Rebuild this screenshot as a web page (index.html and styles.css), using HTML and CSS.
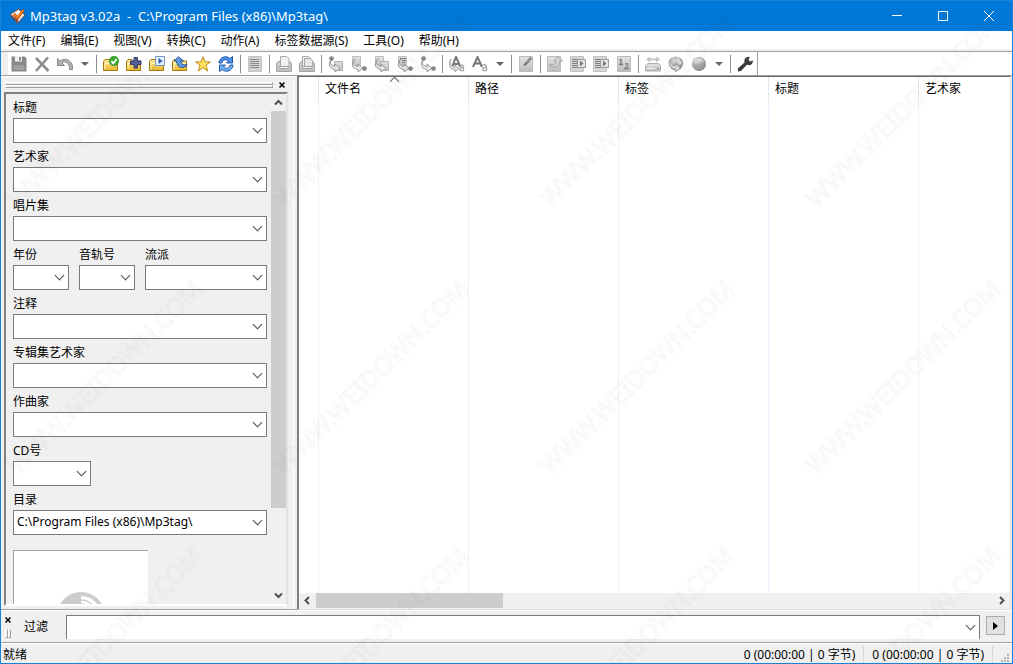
FILE: index.html
```html
<!DOCTYPE html>
<html lang="zh-CN">
<head>
<meta charset="utf-8">
<title>Mp3tag v3.02a</title>
<link rel="stylesheet" href="styles.css">
</head>
<body>
<svg class="defs" aria-hidden="true">
  <defs>
    <linearGradient id="gold" x1="0" y1="0" x2="0" y2="1"><stop offset="0" stop-color="#fff0a0"/><stop offset="1" stop-color="#e8b52c"/></linearGradient>
    <linearGradient id="grey" x1="0" y1="0" x2="0" y2="1"><stop offset="0" stop-color="#e4e4e4"/><stop offset="1" stop-color="#bdbdbd"/></linearGradient>
    <radialGradient id="ball" cx=".35" cy=".3" r=".8"><stop offset="0" stop-color="#d8d8d8"/><stop offset="1" stop-color="#808080"/></radialGradient>
    <symbol id="folder" viewBox="0 0 16 16"><path d="M.5 14.5V5.500L2 3.500h4l1.500 1.500h7v9.500z" fill="url(#gold)" stroke="#a87a0c"/><path d="M2 13.500V7.500h11.500" fill="none" stroke="#fff6c8"/></symbol>
    <symbol id="page" viewBox="0 0 16 16"><path d="M6.500 5.500h8v9h-8z" fill="url(#grey)" stroke="#b0b0b0"/></symbol>
    <symbol id="leaf" viewBox="0 0 16 16"><path d="M1.500.500h8v10h-8z" fill="url(#grey)" stroke="#bdbdbd"/></symbol>
    <symbol id="arrow" viewBox="0 0 16 16"><path d="M4.500 2.500C1.500 5 1.500 9.500 7 10.500V8l5 4.300L7 16v-2.500C0 13 0 5.500 4.500 2.500z" fill="#e6e6e6" stroke="#949494" stroke-width=".9"/></symbol>
    <symbol id="dot" viewBox="0 0 4 4"><circle cx="2" cy="2" r="1.900" fill="#858585"/></symbol>
    <symbol id="tray" viewBox="0 0 16 16"><path d="M.500 7.500 2 5.500h12l1.500 2v8H.500z" fill="#cdcdcd" stroke="#a3a3a3"/><path d="M1.500 14h13" stroke="#b4b4b4"/></symbol>
  </defs>
</svg>

<div class="window">
  <header class="titlebar">
    <svg class="app-icon" viewBox="0 0 16 16" aria-hidden="true"><path d="M.5 6.500 9 1l6.500 6L8 15.500z" fill="#e9dcd5" stroke="#5a3a30" stroke-width=".8"/><path d="M3 6.500 9 2.500l4.500 4.500-5 5z" fill="#fff"/><path d="M1 7.500 8 15l1-2-7-6z" fill="#7c4030"/><path d="M4.500 6 8 10 14 2" fill="none" stroke="#b63a00" stroke-width="2.800"/><path d="M4.800 6 8 9.500 13.800 2.200" fill="none" stroke="#ff8a1c" stroke-width="1.500"/></svg>
    <h1 class="title">Mp3tag v3.02a&nbsp; -&nbsp; C:\Program Files (x86)\Mp3tag\</h1>
    <button class="caption" aria-label="最小化"><svg viewBox="0 0 10 10"><path d="M0 4.500h10"/></svg></button>
    <button class="caption" aria-label="最大化"><svg viewBox="0 0 10 10"><path d="M.5.500h9v9h-9z"/></svg></button>
    <button class="caption" aria-label="关闭"><svg viewBox="0 0 10 10"><path d="m0 0 10 10M10 0 0 10"/></svg></button>
  </header>

  <nav class="menu">
    <button>文件(F)</button><button>编辑(E)</button><button>视图(V)</button><button>转换(C)</button><button>动作(A)</button><button>标签数据源(S)</button><button>工具(O)</button><button>帮助(H)</button>
  </nav>

  <div class="toolbar" role="toolbar">
    <button class="tool" aria-label="保存"><svg viewBox="0 0 16 16"><path d="M.5.500h13l2 2v13H.5z" fill="#888"/><path d="M4 0h7v5.500H4z" fill="#f2f2f2"/><path d="M8 1h2v3.500H8z" fill="#888"/><path d="M2.500 9h11v5h-11z" fill="#a0a0a0"/></svg></button>
    <button class="tool" aria-label="删除"><svg viewBox="0 0 16 16"><path d="M2 2 14.500 15M14 1.500 2 15" fill="none" stroke="#8c8c8c" stroke-width="2.600"/></svg></button>
    <button class="tool" aria-label="撤消"><svg viewBox="0 0 16 16"><path d="M.5 2.500V9.500h7L5 7C8 4.500 13 7 12.500 13.500H15.500C17 5.500 8.500.500 2.800 5z" fill="#b2b2b2" stroke="#808080" stroke-width=".9"/></svg></button>
    <button class="drop" aria-label="撤消列表"></button><span class="sep"></span>
    <button class="tool" aria-label="更改目录"><svg viewBox="0 0 16 16"><use href="#folder"/><circle cx="11" cy="5" r="4.700" fill="#38aa2d" stroke="#1e7d1b" stroke-width=".6"/><path d="m8.300 5 2 2.300L13.700 3" fill="none" stroke="#fff" stroke-width="1.800"/></svg></button>
    <button class="tool" aria-label="添加目录"><svg viewBox="0 0 16 16"><use href="#folder"/><path d="M8 1.500h3.500V5H15v3.500h-3.500V12H8V8.500H4.500V5H8z" fill="#55609a" stroke="#273166" stroke-width=".9"/></svg></button>
    <button class="tool" aria-label="播放列表"><svg viewBox="0 0 16 16"><use href="#folder"/><path d="M6.500.500h9v9h-9z" fill="#e7f1ff" stroke="#7899c8"/><path d="m9.500 2 4 3-4 3z" fill="#225cae"/></svg></button>
    <button class="tool" aria-label="上级目录"><svg viewBox="0 0 16 16"><use href="#folder"/><path d="m6.500.800 5 4.200H9c0 3 2 4.500 6 3.500-2 4.500-10 4.500-10.500-3.500H2z" fill="#619be0" stroke="#174f9d" stroke-width=".9"/></svg></button>
    <button class="tool" aria-label="收藏目录"><svg viewBox="0 0 16 16"><path d="m8 .800 2 5.100h5.400L11 9.200l1.800 5.900L8 11.700l-4.800 3.400L5 9.200.6 5.900H6z" fill="#ffe15e" stroke="#c18a16"/></svg></button>
    <button class="tool" aria-label="刷新"><svg viewBox="0 0 16 16"><path d="M1 7C1.500 1 8-1 12 2.500L14.500.500V7H8.500L10.500 5C7.500 2.500 4.500 4 4 7z" fill="#4d93ea" stroke="#16469c" stroke-width=".9"/><path d="M15 9c-.5 6-7 8-11 4.500L1.500 15.500V9h6L5.500 11C8.500 13.500 11.500 12 12 9z" fill="#6cb4f5" stroke="#16469c" stroke-width=".9"/></svg></button>
    <span class="sep"></span>
    <button class="tool" aria-label="全选"><svg viewBox="0 0 16 16"><path d="M1.500.500h13v15h-13z" fill="#d2d2d2" stroke="#c2c2c2"/><path d="M3 3.500h9M3 5.500h9M3 7.500h9M3 9.500h9M3 11.500h9" stroke="#8c8c8c"/></svg></button>
    <span class="sep"></span>
    <button class="tool" aria-label="复制标签"><svg viewBox="0 0 16 16"><use href="#tray"/><path d="M4.500 10.500V.500h6l2.500 2v8z" fill="#f0f0f0" stroke="#aaa"/><path d="M3 10.500h10v2H3z" fill="#f0f0f0" stroke="#a3a3a3"/></svg></button>
    <button class="tool" aria-label="粘贴标签"><svg viewBox="0 0 16 16"><use href="#tray"/><path d="M3.500 10.500V.500h6l2 2v8z" fill="#eee" stroke="#aaa"/><path d="M5.500 10.500v-8h6l2 2v6z" fill="#e8e8e8" stroke="#a3a3a3"/><path d="M3 10.500h10v2H3z" fill="#f0f0f0" stroke="#a3a3a3"/></svg></button>
    <span class="sep"></span>
    <button class="tool" aria-label="标签到文件名"><svg viewBox="0 0 16 16"><use href="#page"/><use href="#arrow"/><use href="#dot" x="1" width="5" height="5"/></svg></button>
    <button class="tool" aria-label="文件名到标签"><svg viewBox="0 0 16 16"><use href="#leaf"/><use href="#arrow"/><use href="#dot" x="11" y="10" width="5" height="5"/></svg></button>
    <button class="tool" aria-label="文件名到文件名"><svg viewBox="0 0 16 16"><use href="#leaf"/><use href="#page"/><use href="#arrow"/></svg></button>
    <button class="tool" aria-label="文本文件到标签"><svg viewBox="0 0 16 16"><use href="#leaf"/><use href="#arrow"/><path d="M3 2.500h6M5 4.500h4M5 6.500h3" stroke="#777"/><use href="#dot" x="11" y="10" width="5" height="5"/></svg></button>
    <button class="tool" aria-label="标签到标签"><svg viewBox="0 0 16 16"><use href="#arrow"/><use href="#dot" x="1" width="5" height="5"/><use href="#dot" x="11" y="10" width="5" height="5"/></svg></button>
    <span class="sep"></span>
    <button class="tool" aria-label="动作"><svg viewBox="0 0 16 16"><path d="m3 11 4-10 4.500 10M4.500 8h5" fill="none" stroke="#777" stroke-width="2"/><path d="M2.500 3C0 6 1 10 6 11V9l4 3.500L6 16v-2C-1 13-1 6 2.500 3z" fill="#ddd" stroke="#999" stroke-width=".8"/><path d="M11 9.500c4-1 3.500 1 3.500 5-5 1-5-3 0-3" fill="none" stroke="#aaa" stroke-width="1.300"/></svg></button>
    <button class="tool" aria-label="快速动作"><svg viewBox="0 0 16 16"><path d="M1 11 5.500 1 10 11M3 7.500h5.500" fill="none" stroke="#777" stroke-width="2"/><path d="M10.500 9c4.500-1 4 1 4 5.500-5.500 1-5-3.500 0-3" fill="none" stroke="#aaa" stroke-width="1.400"/></svg></button>
    <button class="drop" aria-label="动作列表"></button><span class="sep"></span>
    <button class="tool" aria-label="扩展标签"><svg viewBox="0 0 16 16"><path d="M1.500.500h13v15h-13z" fill="url(#grey)" stroke="#bbb"/><path d="m6 8 6-7 2 1.500-6 7-2.500.5z" fill="#777"/><path d="m8 7 4-4" stroke="#aaa"/></svg></button>
    <span class="sep"></span>
    <button class="tool" aria-label="导出"><svg viewBox="0 0 16 16"><path d="M.500.500h13v15H.500z" fill="url(#grey)" stroke="#bbb"/><path d="M2 9c5 0 7-1 7-4H6.500L11 .500 15.500 5H13c0 6-6 8-11 4z" fill="#d2d2d2" stroke="#999" stroke-width=".8"/></svg></button>
    <button class="tool" aria-label="播放列表全部"><svg viewBox="0 0 16 16"><path d="M.500.500h13v15H.500z" fill="#d6d6d6" stroke="#c2c2c2"/><path d="M2 3.500h8M2 5.500h5M2 7.500h5M2 9.500h5M2 11.500h8" stroke="#808080"/><path d="M7.500 3.500h8v8h-8z" fill="#e5e5e5" stroke="#999"/><path d="m10 4.500 3.500 3L10 10.500z" fill="#777"/></svg></button>
    <button class="tool" aria-label="播放列表所选"><svg viewBox="0 0 16 16"><path d="M.500.500h13v15H.500z" fill="#d6d6d6" stroke="#c2c2c2"/><path d="M2 3.500h8M2 5.500h5M2 7.500h5M2 9.500h5M2 11.500h8" stroke="#808080"/><path d="M7.500 3.500h8v8h-8z" fill="#e5e5e5" stroke="#999"/><path d="m10 4.500 3.500 3L10 10.500z" fill="#777"/></svg></button>
    <button class="tool" aria-label="自动编号"><svg viewBox="0 0 16 16"><path d="M1.500.500h13v15h-13z" fill="url(#grey)" stroke="#bbb"/><path d="M3.500 4.500 5 3.500V8M3 8.500h4M9 8c3.500-1.500 4 1 0 4.500h4" fill="none" stroke="#777" stroke-width="1.300"/></svg></button>
    <span class="sep"></span>
    <button class="tool" aria-label="数据源"><svg viewBox="0 0 16 16"><path d="m1 3.500 4-3v2h6v-2l4 3-4 3v-2H5v2z" fill="#c4c4c4"/><path d="M.500 9.500 3 7.500h10.500l2 2v5.500H.500z" fill="url(#grey)" stroke="#b0b0b0"/><path d="M2 12.500h8" stroke="#f6f6f6"/><path d="M12 12.500h2" stroke="#777"/></svg></button>
    <button class="tool" aria-label="网络数据源"><svg viewBox="0 0 16 16"><circle cx="8" cy="7.500" r="7" fill="url(#ball)"/><path d="M8 1l3 1 3 5-2 2-3-3z" fill="#ddd"/><path d="M3 2.500c-2 4 0 6.500 4.500 7.500V7.500l5 4.300L7.500 16v-2.500C1 12-1 6 3 2.500z" fill="#d8d8d8" stroke="#8c8c8c" stroke-width=".7"/></svg></button>
    <button class="tool" aria-label="标签数据源"><svg viewBox="0 0 16 16"><circle cx="8" cy="8" r="7" fill="url(#ball)"/><path d="m3 4 4-2 4 1 2 3-3-1-2 1-3-1-2 1z" fill="#ddd"/><path d="M3 8h10l-2 4-3 1-3-2z" fill="#999" opacity=".5"/></svg></button>
    <button class="drop" aria-label="数据源列表"></button><span class="sep"></span>
    <button class="tool" aria-label="选项"><svg viewBox="0 0 16 16"><path d="M10 1 13 .800 11.500 3.500l1.500 2 3-1c0 4-3 5.500-6 4.300L4 15l-3 .500L.800 12.500 7.500 6.500C7 4 7.500 2 10 1z" fill="#3b3d40"/></svg></button>
    <span class="toolbar-end"></span>
  </div>

  <main class="work">
    <aside class="dock">
      <div class="grip-row"><div class="grip"><i></i><i></i></div><button class="mini-close" aria-label="关闭面板"><svg viewBox="0 0 6 6"><path d="m.5.500 5 5m0-5-5 5"/></svg></button></div>
      <div class="panel">
        <form class="fields">
          <div class="field"><label for="f-title">标题</label><div class="combo"><select id="f-title"><option></option></select></div></div>
          <div class="field"><label for="f-artist">艺术家</label><div class="combo"><select id="f-artist"><option></option></select></div></div>
          <div class="field"><label for="f-album">唱片集</label><div class="combo"><select id="f-album"><option></option></select></div></div>
          <div class="trio">
            <div class="field small"><label for="f-year">年份</label><div class="combo"><select id="f-year"><option></option></select></div></div>
            <div class="field small"><label for="f-track">音轨号</label><div class="combo"><select id="f-track"><option></option></select></div></div>
            <div class="field"><label for="f-genre">流派</label><div class="combo"><select id="f-genre"><option></option></select></div></div>
          </div>
          <div class="field"><label for="f-comment">注释</label><div class="combo"><select id="f-comment"><option></option></select></div></div>
          <div class="field"><label for="f-aa">专辑集艺术家</label><div class="combo"><select id="f-aa"><option></option></select></div></div>
          <div class="field"><label for="f-comp">作曲家</label><div class="combo"><select id="f-comp"><option></option></select></div></div>
          <div class="field disc"><label for="f-disc">CD号</label><div class="combo"><select id="f-disc"><option></option></select></div></div>
          <div class="field"><label for="f-dir">目录</label><div class="combo"><select id="f-dir"><option>C:\Program Files (x86)\Mp3tag\</option></select></div></div>
          <div class="cover"><svg viewBox="0 0 48 48" aria-hidden="true"><circle cx="24" cy="24" r="24" fill="#cdcdcd"/><path d="M24 4a20 20 0 0 1 20 20H24z" fill="#fff"/><path d="M24 8a16 16 0 0 1 16 16M24 12a12 12 0 0 1 12 12" fill="none" stroke="#cdcdcd" stroke-width="1.500"/><circle cx="24" cy="24" r="6" fill="#fff"/></svg></div>
        </form>
        <div class="scroll vertical">
          <button aria-label="向上滚动"><svg viewBox="0 0 9 9"><path d="m1 6.500 3.500-3.500L8 6.500"/></svg></button>
          <span class="thumb"></span><span class="rest"></span>
          <button aria-label="向下滚动"><svg viewBox="0 0 9 9"><path d="m1 2.500 3.500 3.500L8 2.500"/></svg></button>
        </div>
      </div>
    </aside>

    <section class="list">
      <div class="table-box">
        <table>
          <colgroup><col class="c-icon"><col class="c"><col class="c"><col class="c"><col class="c"><col></colgroup>
          <thead><tr><th></th><th class="sorted">文件名</th><th>路径</th><th>标签</th><th>标题</th><th>艺术家</th></tr></thead>
          <tbody><tr><td></td><td></td><td></td><td></td><td></td><td></td></tr></tbody>
        </table>
      </div>
      <div class="scroll horizontal">
        <button aria-label="向左滚动"><svg viewBox="0 0 9 9"><path d="M6 1 2.500 4.500 6 8"/></svg></button>
        <span class="thumb"></span><span class="rest"></span>
        <button aria-label="向右滚动"><svg viewBox="0 0 9 9"><path d="m3 1 3.500 3.500L3 8"/></svg></button>
      </div>
    </section>
  </main>

  <div class="filter">
    <div class="filter-grip"><button class="mini-close" aria-label="关闭过滤"><svg viewBox="0 0 6 6"><path d="m.5.500 5 5m0-5-5 5"/></svg></button><div class="grip upright"><i></i><i></i></div></div>
    <label for="f-filter">过滤</label>
    <div class="combo"><select id="f-filter"><option></option></select></div>
    <button class="go" aria-label="快速过滤"><svg viewBox="0 0 5 8"><path d="M0 0 5 4 0 8z"/></svg></button>
  </div>

  <footer class="status">
    <span class="ready">就绪</span><span class="cell">0 (00:00:00 | 0 字节)</span><span class="cell">0 (00:00:00 | 0 字节)</span>
    <svg class="sizer" viewBox="0 0 9 9" aria-hidden="true"><path d="M6 0h2v2H6zM3 3h2v2H3zM6 3h2v2H6zM0 6h2v2H0zM3 6h2v2H3zM6 6h2v2H6z"/></svg>
  </footer>

  <svg class="watermark" aria-hidden="true">
    <defs><pattern id="wm" width="266" height="267" patternUnits="userSpaceOnUse"><text transform="translate(18 208) rotate(-45)">WWW.WEIDOWN.COM</text></pattern></defs>
    <rect width="100%" height="100%" fill="url(#wm)"/>
  </svg>
</div>
</body>
</html>
```

FILE: styles.css
```css
* { box-sizing: border-box; }

body {
  margin: 0;
  font: 12px/18px "Noto Sans", "Noto Sans CJK SC", sans-serif;
  color: #000;
}

button, select { font: inherit; color: inherit; border: 0; padding: 0; margin: 0; background: none; }
button { display: flex; align-items: center; justify-content: center; flex: none; }
svg { display: block; }
.defs { position: absolute; width: 0; height: 0; }

.window {
  position: relative;
  display: flex;
  flex-direction: column;
  height: 100vh;
  border: 1px solid #1883d7;
  background: #f0f0f0;
  overflow: hidden;
}

/* Title bar */
.titlebar { display: flex; align-items: center; height: 30px; flex: none; background: #0078d7; color: #fff; padding-left: 8px; }
.app-icon { width: 17px; height: 16px; }
.title { flex: 1; margin: 0; padding-left: 4px; font-size: 13px; font-weight: 400; white-space: nowrap; }
.caption { width: 46px; height: 30px; }
.caption svg { width: 10px; height: 10px; fill: none; stroke: #fff; }

/* Menu */
.menu { display: flex; flex: none; height: 20px; background: #fff; border-bottom: 2px solid #f0f0f0; }
.menu button { height: 18px; padding: 2px 8px 0 7px; white-space: nowrap; }

/* Toolbar */
.toolbar { display: flex; flex: none; height: 25px; padding-left: 7px; border-top: 1px solid #a0a0a0; border-bottom: 1px solid #a0a0a0; background: linear-gradient(90deg, #f0f0f0 7px, #fff 7px); }
.tool { width: 23px; height: 23px; padding-right: 1px; }
.tool svg { width: 16px; height: 16px; }
.drop { width: 17px; height: 23px; padding-right: 1px; }
.drop::after { content: ""; border: 4px solid transparent; border-top-color: #666; border-bottom: 0; }
.sep { width: 6px; height: 18px; margin-top: 3px; flex: none; background: linear-gradient(#8c8c8c, #8c8c8c) 2px 0 / 1px 100% no-repeat; }
.toolbar-end { width: 1px; background: #a0a0a0; }

/* Work area */
.work { display: flex; flex: 1; min-height: 0; }
.dock { display: flex; flex-direction: column; flex: none; width: 296px; padding: 0 9px 3px 3px; border-top: 1px solid #fff; border-bottom: 1px solid #a0a0a0; background: linear-gradient(#fff, #fff) 292px 0 / 1px 100% no-repeat; }
.grip-row { display: flex; align-items: center; gap: 6px; height: 15px; flex: none; padding: 0 3px 0 1px; }
.grip { display: flex; flex-direction: column; flex: 1; }
.grip i { height: 3px; border: 1px solid #a0a0a0; border-top-color: #fff; border-left-color: #fff; }
.mini-close svg { width: 6px; height: 6px; fill: none; stroke: #000; stroke-width: 1.5; }

.panel { display: flex; flex: 1; min-height: 0; border: 2px solid; border-color: #808080 #e3e3e3 #fff #808080; }
.fields { flex: 1; min-width: 0; overflow: hidden; padding: 5px 4px 0 7px; }
.field { display: flex; flex-direction: column; gap: 1px; margin-bottom: 5px; flex: 1; }
.trio { display: flex; gap: 10px; }
.field.small { flex: none; width: 56px; }
.field.disc { width: 78px; }
.combo { position: relative; height: 25px; }
.combo select { appearance: none; display: block; width: 100%; height: 100%; padding: 0 18px 2px 3px; border: 1px solid #7a7a7a; border-radius: 0; background: #fff; }
.combo::after { content: ""; position: absolute; right: 6px; top: 7px; width: 6px; height: 6px; border: solid #505050; border-width: 0 1px 1px 0; transform: rotate(45deg); pointer-events: none; }
.cover { width: 135px; height: 135px; margin-top: 15px; padding-top: 41px; background: #fff; border-top: 1px solid #a0a0a0; border-left: 1px solid #a0a0a0; }
.cover svg { width: 48px; height: 48px; margin: 0 auto; }

/* Scroll bars */
.scroll { display: flex; flex: none; background: #f0f0f0; }
.scroll svg { width: 9px; height: 9px; fill: none; stroke: #505050; stroke-width: 2; }
.scroll .thumb { background: #cdcdcd; }
.vertical { flex-direction: column; width: 15px; }
.vertical button { height: 17px; }
.vertical .thumb { flex: 397; }
.vertical .rest { flex: 79; }
.horizontal { height: 16px; padding-bottom: 1px; }
.horizontal button { width: 17px; }
.horizontal .thumb { flex: 187; }
.horizontal .rest { flex: 490; }

/* File list */
.list { display: flex; flex-direction: column; flex: 1; min-width: 0; border: 1px solid #e3e3e3; border-top-color: #696969; border-left: 2px solid #808080; margin-right: 1px; background: #fff; }
.table-box { flex: 1; min-height: 0; overflow: hidden; }
table { width: 100%; height: 100%; table-layout: fixed; border-collapse: separate; border-spacing: 0; }
.c-icon { width: 20px; }
.c { width: 150px; }
th { position: relative; height: 24px; padding: 0 6px; text-align: left; font-weight: 400; white-space: nowrap; border-right: 1px solid #e5e5e5; }
td { padding: 0; border-right: 1px solid #eaf2ff; }
th:last-child, td:last-child { border-right: 0; }
.sorted::before { content: ""; position: absolute; left: 72px; top: 1px; width: 6px; height: 6px; border: solid #606060; border-width: 1px 0 0 1px; transform: rotate(45deg); }

/* Filter bar */
.filter { display: flex; flex: none; height: 33px; border-top: 1px solid #fff; border-bottom: 1px solid #a0a0a0; padding-right: 7px; }
.filter-grip { display: flex; flex-direction: column; align-items: center; gap: 6px; width: 14px; padding: 6px 0 4px; }
.upright { flex-direction: row; flex: 1; }
.upright i { width: 3px; height: auto; }
.filter label { width: 51px; padding: 7px 0 0 9px; }
.filter .combo { flex: 1; height: 24px; margin-top: 4px; }
.filter .combo select { border-bottom: 0; }
.go { width: 19px; height: 19px; margin: 5px 0 0 6px; background: #e1e1e1; border: 1px solid #adadad; }
.go svg { width: 5px; height: 8px; }

/* Status bar */
.status { display: flex; flex: none; height: 20px; border-top: 1px solid #fff; padding: 2px 2px 0; }
.ready { flex: 1; }
.cell { padding: 0 8px; border-right: 1px solid #d7d7d7; white-space: nowrap; }
.sizer { width: 9px; height: 9px; margin: 8px 0 0 8px; fill: #b5b5b5; }

.watermark { position: absolute; inset: 0; width: 100%; height: 100%; pointer-events: none; }
.watermark text { font: 25px "Noto Sans", sans-serif; fill: none; stroke: #000; stroke-opacity: .04; stroke-width: 1; }
```
